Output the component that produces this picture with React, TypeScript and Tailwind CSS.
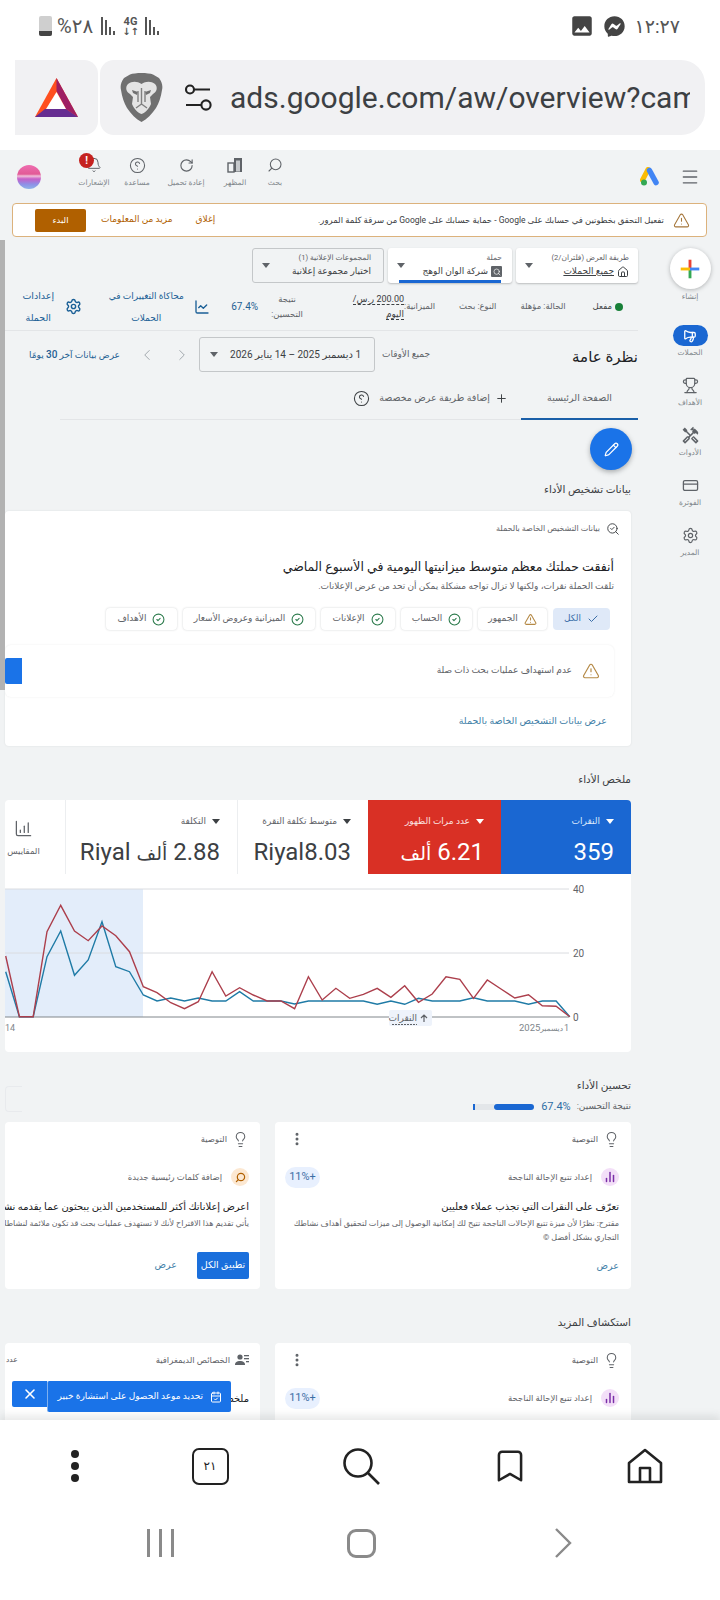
import React from "react";
import { Search, RotateCw, CircleHelp, Bell, Menu, Megaphone, Trophy, CreditCard, Settings, SearchCheck, Check, CircleCheck, TriangleAlert, Lightbulb, Pencil, EllipsisVertical, ChartColumnIncreasing, Plus, X, House, Bookmark, ChevronLeft, ChevronRight, ChartLine, CalendarCheck, ChartNoAxesColumn } from "lucide-react";
import { FaFacebookMessenger } from "react-icons/fa";
import { MdImage, MdOutlineHandyman } from "react-icons/md";

const Caret = ({ c = "border-t-[#5f6368]" }: { c?: string }) => (
  <span className={`inline-block w-0 h-0 border-x-[4px] border-x-transparent border-t-[5px] ${c}`} />
);

const Signal = () => (
  <svg width="18" height="18" viewBox="0 0 18 18" fill="#555">
    <rect x="0" y="0" width="2" height="18" /><rect x="4" y="3" width="2" height="15" /><rect x="8" y="10" width="2" height="8" /><rect x="12" y="14" width="2" height="4" />
  </svg>
);

const HeaderItem = ({ icon, label, className = "" }: { icon: React.ReactNode; label: string; className?: string }) => (
  <div className={`w-[40px] pt-[6px] flex flex-col items-center relative ${className}`}>
    <div className="h-[18px] flex items-center justify-center text-[#5f6368]">{icon}</div>
    <div className="mt-[3px] h-[12px] leading-[12px] text-[7.5px] text-[#80868b] whitespace-nowrap">{label}</div>
  </div>
);

const SideItem = ({ icon, label, active = false }: { icon: React.ReactNode; label: string; active?: boolean }) => (
  <div className="h-[50px] w-[60px] flex flex-col items-center">
    <div className={`h-[21px] w-[35px] rounded-full flex items-center justify-center ${active ? "bg-[#1a67d2] text-white" : "text-[#5f6368]"}`}>{icon}</div>
    <div className="mt-[1px] h-[12px] leading-[12px] text-[7.5px] text-[#80868b] whitespace-nowrap">{label}</div>
  </div>
);

const DiagChip = ({ label, icon, w, active = false }: { label: string; icon: React.ReactNode; w: string; active?: boolean }) => (
  <div className={`${w} h-[22px] rounded-[4px] flex items-center justify-center gap-[6px] text-[9px] whitespace-nowrap ${active ? "bg-[#dfe9f8] text-[#3b6ea8]" : "bg-white shadow-[0_0_2px_rgba(60,64,67,0.25)] text-[#5f6368]"}`}>
    {icon}<span>{label}</span>
  </div>
);

const okIcon = <CircleCheck size={13} className="text-[#2f7d4f]" />;

const Metric = ({ label, value, cls, labelCls, caret }: { label: string; value: React.ReactNode; cls: string; labelCls: string; caret: string }) => (
  <div className={`${cls} h-full flex flex-col pr-[17px] whitespace-nowrap overflow-hidden`}>
    <div className={`mt-[15px] h-[12px] leading-[12px] text-[9px] flex items-center gap-[6px] ${labelCls}`}>
      <Caret c={caret} /><span>{label}</span>
    </div>
    <div className="mt-[10px] text-[24px] leading-[30px]">{value}</div>
  </div>
);

const redY = [258,440,440,185,106,183,212,168,197,245,350,368,398,416,395,305,378,353,375,393,393,416,320,390,355,385,373,355,382,347,397,372,320,328,385,330,357,384,374,407,409,440];
const blueY = [305,440,440,260,183,316,270,155,290,305,375,393,384,393,384,393,393,365,393,393,393,402,393,393,393,393,393,403,393,403,385,393,393,393,383,393,393,393,403,393,393,440];
const pts = (a: number[]) => a.map((y, i) => `${(5.67 + i * 13.76).toFixed(1)},${(y / 3 + 870).toFixed(1)}`).join(" ");

const RecHead = ({ more = false }: { more?: boolean }) => (
  <div className="h-[34px] flex items-center pr-[11px] pl-[14px] text-[#5f6368]">
    <Lightbulb size={17} strokeWidth={1.5} />
    <span className="mr-[5px] text-[8.5px]">التوصية</span>
    {more && <EllipsisVertical size={16} strokeWidth={2.5} className="mr-auto" />}
  </div>
);

const PurpleRow = () => (
  <div className="h-[24px] mt-[9px] flex items-center pr-[12px] pl-[10px]">
    <span className="w-[18px] h-[18px] rounded-full bg-[#f3dff8] flex items-center justify-center text-[#7b2fa8]"><ChartNoAxesColumn size={12} strokeWidth={3} /></span>
    <span className="mr-[9px] text-[8.5px] text-[#5f6368]">إعداد تتبع الإحالة الناجحة</span>
    <span className="mr-auto w-[35px] h-[21px] rounded-full bg-[#e8f0fe] text-[#3c6ea5] text-[11px] flex items-center justify-center">+11%</span>
  </div>
);

export default function App() {
  return (
    <div dir="ltr" className="relative w-[720px] h-[1600px] overflow-hidden bg-white font-[Roboto,'DejaVu_Sans',sans-serif]">
      {/* status bar */}
      <div className="h-[60px] flex items-start justify-between pl-[39px] pr-[40px] pt-[16px] text-[#555]">
        <div className="flex items-center h-[20px]">
          <div className="w-[13px] h-[20px] rounded-[2px] bg-[#cfcfcf] flex items-end overflow-hidden"><div className="w-full h-[5px] bg-[#444]" /></div>
          <span className="ml-[5px] text-[20px] leading-none">%٢٨</span>
          <span className="ml-[8px]"><Signal /></span>
          <span className="ml-[3px] flex flex-col items-center text-[11px] leading-[10px] font-bold"><span>4G</span><span className="text-[10px] leading-[9px]">↓↑</span></span>
          <span className="ml-[6px]"><Signal /></span>
        </div>
        <div className="flex items-center h-[20px]">
          <MdImage size={26} className="text-[#444]" />
          <FaFacebookMessenger size={21} className="ml-[9px] text-[#444]" />
          <span className="ml-[10px] text-[19px] leading-none">١٢:٢٧</span>
        </div>
      </div>

      {/* url bar */}
      <div className="h-[90px] pl-[15px] pr-[15px] flex items-start">
        <div className="w-[83px] h-[75px] bg-[#f1f1f3] rounded-r-[14px] flex items-center justify-center">
          <svg width="43" height="40" viewBox="0 0 43 40">
            <polygon points="21.5,0 43,39 0,39" fill="#ff4f1f" />
            <polygon points="21.5,0 43,39 31,31 21.5,13" fill="#9e1f63" />
            <polygon points="0,39 43,39 31,31 10,31" fill="#662d91" />
            <polygon points="21.5,14 31,31 11,31" fill="#fff" />
          </svg>
        </div>
        <div className="flex-1 ml-[2px] h-[75px] bg-[#f1f1f3] rounded-l-[14px] rounded-r-[24px] flex items-center pl-[20px] pr-[15px] overflow-hidden">
          <svg width="43" height="49" viewBox="0 0 43 49" className="shrink-0">
            <path d="M10 1.5 C15 -0.5 28 -0.5 33 1.5 L39 5 C42 9 43 13 42 17 C41 24 39 30 36 35 C32 41 27 46 21.5 49 C16 46 11 41 7 35 C4 30 2 24 1 17 C0 13 1 9 4 5 Z" fill="#707070" />
            <path d="M8 11 C12 8 17 8 21.5 11 C26 8 31 8 35 11 C38 14 37 19 33 21 L30 24 L31 31 C29 36 25 40 21.5 41 C18 40 14 36 12 31 L13 24 L10 21 C6 19 5 14 8 11 Z" fill="#e4e4e4" />
            <path d="M12 17 L18 19 L17 22 L13 20 Z M31 17 L25 19 L26 22 L30 20 Z" fill="#707070" />
            <path d="M21.5 15 V31 M21.5 31 L16 35 M21.5 31 L27 35 M18 18 V29 M25 18 V29" stroke="#808080" strokeWidth="1.4" fill="none" />
          </svg>
          <svg width="27" height="27" viewBox="0 0 27 27" fill="none" stroke="#222" strokeWidth="2.1" className="shrink-0 ml-[22px]">
            <circle cx="5" cy="5.5" r="4" /><path d="M9 5.5h16" />
            <circle cx="21" cy="21" r="4.6" /><path d="M1 21h15.5" />
          </svg>
          <div className="ml-[18px] flex-1 overflow-hidden whitespace-nowrap text-[30px] leading-[40px] text-[#3c4043]">ads.google.com/aw/overview?campaignId=23</div>
        </div>
      </div>

      {/* main gray */}
      <div dir="rtl" className="relative h-[1270px] bg-[#f1f3f4] overflow-hidden">
        {/* header */}
        <div className="h-[53px] flex items-start pr-[20px] pl-[17px]">
          <Menu size={20} strokeWidth={1.6} className="self-center text-[#5f6368]" />
          <svg width="22" height="20" viewBox="0 0 22 20" className="self-center mr-[18px]">
            <path d="M8 2.5 L2.5 13" stroke="#fbbc04" strokeWidth="5" strokeLinecap="round" />
            <path d="M9.5 3.5 L16 15.5" stroke="#4285f4" strokeWidth="5.5" strokeLinecap="round" />
            <circle cx="4" cy="15.5" r="3" fill="#34a853" />
          </svg>
          <div className="flex-1" />
          <HeaderItem icon={<Search size={16} strokeWidth={1.6} className="-scale-x-100" />} label="بحث" />
          <HeaderItem icon={
            <svg width="16" height="16" viewBox="0 0 16 16"><rect x="1" y="6" width="6" height="9" fill="none" stroke="currentColor" strokeWidth="1.4" /><rect x="7" y="1" width="8" height="14" fill="currentColor" /><rect x="9" y="3.5" width="4" height="11" fill="#c6c9cc" /></svg>
          } label="المظهر" />
          <HeaderItem className="mr-[9px]" icon={<RotateCw size={15} strokeWidth={1.8} />} label="إعادة تحميل" />
          <HeaderItem className="mr-[9px]" icon={<CircleHelp size={17} strokeWidth={1.5} className="-scale-x-100" />} label="مساعدة" />
          <HeaderItem className="mr-[3px]" icon={<Bell size={16} strokeWidth={1.5} />} label="الإشعارات" />
          <div className="absolute left-[79px] top-[3px] w-[15px] h-[15px] rounded-full bg-[#c5221f] text-white text-[10px] leading-[15px] text-center font-bold">!</div>
          <div className="self-center mr-[33px] w-[24px] h-[24px] rounded-full bg-[linear-gradient(180deg,#ee6db0_0%,#e25a96_38%,#f0c0d8_46%,#c65fc8_58%,#8f8fe6_80%,#8db4e8_100%)]" />
        </div>

        {/* banner */}
        <div className="mr-[13px] ml-[12px] h-[34px] bg-white border border-[#dcb27c] rounded-[4px] flex items-center pr-[16px] pl-[22px]">
          <TriangleAlert size={17} strokeWidth={1.5} className="text-[#a5763a] shrink-0" />
          <span className="mr-[9px] text-[8.5px] text-[#3c4043] whitespace-nowrap">تفعيل التحقق بخطوتين في حسابك على Google - حماية حسابك على Google من سرقة كلمة المرور.</span>
          <span className="mr-auto text-[9px] text-[#b06000]">إغلاق</span>
          <span className="mr-[23px] text-[9px] text-[#b06000] whitespace-nowrap">مزيد من المعلومات</span>
          <span className="mr-[15px] w-[51px] h-[23px] bg-[#b06000] rounded-[2px] text-white text-[8.5px] flex items-center justify-center">البدء</span>
        </div>

        {/* body */}
        <div className="flex items-start">
          {/* sidebar */}
          <div className="w-[82px] shrink-0 flex flex-col items-start">
            <div className="mt-[11px] w-[60px] flex justify-center relative z-10">
              <div className="w-[41px] h-[41px] rounded-full bg-white shadow-[0_1px_4px_rgba(60,64,67,0.35)] flex items-center justify-center">
                <svg width="20" height="20" viewBox="0 0 28 28">
                  <rect x="12" y="1" width="4" height="13" fill="#ea4335" /><rect x="12" y="14" width="4" height="13" fill="#34a853" />
                  <rect x="1" y="12" width="13" height="4" fill="#fbbc04" /><rect x="14" y="12" width="13" height="4" fill="#4285f4" />
                </svg>
              </div>
            </div>
            <div className="w-[60px] mt-[2px] h-[12px] text-center leading-[12px] text-[7.5px] text-[#80868b]">إنشاء</div>
            <div className="h-[22px]" />
            <SideItem active icon={<Megaphone size={14} strokeWidth={2.2} className="-scale-x-100" />} label="الحملات" />
            <SideItem icon={<Trophy size={17} strokeWidth={1.7} />} label="الأهداف" />
            <SideItem icon={<MdOutlineHandyman size={19} />} label="الأدوات" />
            <SideItem icon={<CreditCard size={17} strokeWidth={1.8} />} label="الفوترة" />
            <SideItem icon={<Settings size={17} strokeWidth={1.7} />} label="المدير" />
          </div>

          {/* content */}
          <div className="w-[638px] shrink-0 relative">
            {/* scrollbar strip */}
            <div className="absolute left-0 top-[3px] w-[5px] h-[450px] bg-[#b2b2b2] z-10" />

            <div className="mt-[11px] h-[35px] flex gap-[4px]">
              <div className="w-[122px] bg-white rounded-[3px] shadow-[0_1px_2px_rgba(60,64,67,0.3)] flex items-center pr-[9px] pl-[9px]">
                <div className="flex-1">
                  <div className="text-[7.5px] leading-[12px] text-[#5f6368] whitespace-nowrap">طريقة العرض (فلتران/2)</div>
                  <div className="flex items-center gap-[3px] text-[9px] leading-[15px] text-[#3c4043] whitespace-nowrap"><House size={12} /><span className="underline">جميع الحملات</span></div>
                </div>
                <Caret />
              </div>
              <div className="w-[124px] relative bg-white rounded-[3px] shadow-[0_1px_2px_rgba(60,64,67,0.3)] flex items-center pr-[10px] pl-[9px]">
                <div className="flex-1">
                  <div className="text-[7.5px] leading-[12px] text-[#5f6368]">حملة</div>
                  <div className="flex items-center gap-[3px] text-[9px] leading-[15px] text-[#3c4043] whitespace-nowrap"><span className="w-[11px] h-[11px] bg-[#5f6368] rounded-[1px] flex items-center justify-center"><Search size={8} className="text-white" /></span><span>شركة الوان الوهج</span></div>
                </div>
                <Caret />
                <div className="absolute bottom-0 right-[11px] w-[102px] h-[3px] bg-[#1a67d2]" />
              </div>
              <div className="w-[132px] bg-[#f1f3f4] border border-[#c4c7c9] rounded-[3px] flex items-center pr-[12px] pl-[9px]">
                <div className="flex-1">
                  <div className="text-[7.5px] leading-[12px] text-[#5f6368] whitespace-nowrap">المجموعات الإعلانية (1)</div>
                  <div className="text-[9px] leading-[15px] text-[#3c4043] whitespace-nowrap">اختيار مجموعة إعلانية</div>
                </div>
                <Caret />
              </div>
            </div>

            {/* status row */}
            <div className="h-[48px] border-b border-[#e3e5e7] flex items-center text-[8.5px] text-[#5f6368] whitespace-nowrap ml-[5px]">
              <span className="w-[8px] h-[8px] rounded-full bg-[#188038] mr-[15px]" />
              <span className="mr-[3px] text-[#3c4043]">مفعل</span>
              <span className="mr-[27px]">الحالة: مؤهلة</span>
              <span className="mr-[24px]">النوع: بحث</span>
              <span className="mr-[24px]">الميزانية:</span>
              <span className="w-[54px] text-[#3c4043] text-[9px] leading-[15px] whitespace-normal"><span className="border-b border-dashed border-[#3c4043]">200.00 ر.س/ اليوم</span></span>
              <span className="mr-[46px] w-[34px] leading-[15px] whitespace-normal text-center">نتيجة التحسين:</span>
              <span className="mr-[12px] text-[#1f5f93] text-[10px]">67.4%</span>
              <ChartLine size={16} className="mr-[21px] text-[#1a5f96]" />
              <span className="mr-[6px] w-[84px] leading-[22px] text-[9px] whitespace-normal text-center text-[#1a5f96]">محاكاة التغييرات في الحملات</span>
              <Settings size={17} className="mr-[22px] text-[#1a5f96]" />
              <span className="mr-[10px] w-[34px] leading-[22px] text-[9.5px] whitespace-normal text-center text-[#1a5f96]">إعدادات الحملة</span>
            </div>

            {/* overview row */}
            <div className="h-[47px] flex items-center">
              <div className="text-[15px] text-[#202124] whitespace-nowrap pt-[5px]">نظرة عامة</div>
              <div className="mr-auto pl-[26px] flex items-center text-[#5f6368] whitespace-nowrap">
                <span className="text-[9px]">جميع الأوقات</span>
                <div className="mr-[7px] w-[176px] h-[35px] border border-[#c4c7c9] rounded-[3px] flex items-center justify-between pr-[13px] pl-[10px] text-[10px] text-[#3c4043]">
                  <span>1 ديسمبر 2025 – 14 يناير 2026</span><Caret />
                </div>
                <ChevronRight size={18} strokeWidth={1.2} className="mr-[8px] text-[#9aa0a6]" />
                <ChevronLeft size={18} strokeWidth={1.2} className="mr-[17px] text-[#9aa0a6]" />
                <span className="mr-[18px] w-[94px] text-[9px] text-[#1f5f93]">عرض بيانات آخر <span className="text-[10px] font-medium">30</span> يومًا</span>
              </div>
            </div>

            {/* tabs */}
            <div className="h-[42px] ml-[60px] border-b border-[#e3e5e7] flex items-stretch text-[9.5px] text-[#5f6368] whitespace-nowrap">
              <div className="w-[117px] -mb-[1px] border-b-2 border-[#1a5fa8] flex items-center justify-center">الصفحة الرئيسية</div>
              <div className="mr-[13px] flex items-center">
                <Plus size={13} strokeWidth={1.8} className="text-[#3c4043]" />
                <span className="mr-[5px]">إضافة طريقة عرض مخصصة</span>
                <CircleHelp size={17} strokeWidth={1.5} className="mr-[9px] -scale-x-100 text-[#3c4043]" />
              </div>
            </div>

            {/* pencil */}
            <div className="mt-[8px] mr-[6px] h-[42px] flex">
              <div className="w-[42px] h-[42px] rounded-full bg-[#1a73e8] shadow-[0_2px_5px_rgba(60,64,67,0.4)] flex items-center justify-center"><Pencil size={15} className="text-white" /></div>
            </div>

            <div className="mr-[7px] h-[40px] mb-[1px] flex items-center text-[10.5px] text-[#3c4043]">بيانات تشخيص الأداء</div>

            {/* diagnostic card */}
            <div className="mr-[7px] ml-[5px] h-[235px] bg-white rounded-[4px] overflow-hidden shadow-[0_0_2px_rgba(60,64,67,0.12)]">
              <div className="h-[34px] flex items-center pr-[11px] pt-[1px] text-[8px] text-[#5f6368]">
                <SearchCheck size={14} strokeWidth={1.6} className="text-[#3c4043]" />
                <span className="mr-[6px]">بيانات التشخيص الخاصة بالحملة</span>
              </div>
              <div className="mt-[12px] pr-[17px] text-[12.5px] leading-[20px] text-[#202124] whitespace-nowrap">أنفقت حملتك معظم متوسط ميزانيتها اليومية في الأسبوع الماضي</div>
              <div className="pr-[17px] text-[9px] leading-[18px] text-[#5f6368] whitespace-nowrap">تلقت الحملة نقرات، ولكنها لا تزال تواجه مشكلة يمكن أن تحد من عرض الإعلانات.</div>
              <div className="mt-[13px] pr-[21px] flex gap-[6px]">
                <DiagChip active w="w-[57px]" label="الكل" icon={<Check size={12} />} />
                <DiagChip w="w-[69px]" label="الجمهور" icon={<TriangleAlert size={13} className="text-[#b58a47]" />} />
                <DiagChip w="w-[71px]" label="الحساب" icon={okIcon} />
                <DiagChip w="w-[74px]" label="الإعلانات" icon={okIcon} />
                <DiagChip w="w-[132px]" label="الميزانية وعروض الأسعار" icon={okIcon} />
                <DiagChip w="w-[71px]" label="الأهداف" icon={okIcon} />
              </div>
              <div className="mt-[15px] mr-[17px] h-[52px] rounded-[6px] shadow-[0_0_2px_rgba(60,64,67,0.1)] flex items-center pr-[14px]">
                <TriangleAlert size={18} strokeWidth={1.6} className="text-[#b58a47]" />
                <span className="mr-[10px] text-[9px] text-[#5f6368] whitespace-nowrap">عدم استهداف عمليات بحث ذات صلة</span>
                <span className="mr-auto w-[17px] h-[26px] bg-[#1a73e8] rounded-l-[2px]" />
              </div>
              <div className="mt-[15px] pr-[24px] text-[9.5px] leading-[18px] text-[#3f7fa8] whitespace-nowrap">عرض بيانات التشخيص الخاصة بالحملة</div>
            </div>

            <div className="mt-[24px] mb-[10px] mr-[7px] h-[20px] flex items-center text-[10.5px] text-[#3c4043]">ملخص الأداء</div>

            {/* metrics */}
            <div className="mr-[7px] ml-[5px] h-[74px] flex bg-white rounded-t-[4px] overflow-hidden">
              <Metric cls="w-[130px] bg-[#1a67d2] text-white" labelCls="text-[#dbe8fb]" caret="border-t-white" label="النقرات" value="359" />
              <Metric cls="w-[133px] bg-[#d93025] text-white" labelCls="text-[#fbe3e1]" caret="border-t-white" label="عدد مرات الظهور" value={<>6.21 <span className="text-[19px]">ألف</span></>} />
              <Metric cls="w-[131px] border-l border-[#eceef0] text-[#3c4043]" labelCls="text-[#5f6368]" caret="border-t-[#3c4043]" label="متوسط تكلفة النقرة" value="Riyal8.03" />
              <Metric cls="w-[172px] border-l border-[#eceef0] text-[#3c4043]" labelCls="text-[#5f6368]" caret="border-t-[#3c4043]" label="التكلفة" value={<>2.88 <span className="text-[19px]">ألف</span> Riyal</>} />
              <div className="flex-1 flex flex-col items-end pl-[2px] pt-[19px] text-[#5f6368]">
                <div className="w-[33px] flex flex-col items-center">
                  <ChartColumnIncreasing size={19} strokeWidth={1.6} />
                  <span className="mt-[7px] text-[8.5px] whitespace-nowrap">المقاييس</span>
                </div>
              </div>
            </div>

            {/* chart */}
            <div className="mr-[7px] ml-[5px] h-[178px] bg-white rounded-b-[4px] overflow-hidden">
              <svg width="626" height="178" viewBox="5 874 626 178" className="block [direction:ltr]">
                <rect x="5" y="889" width="138" height="128" fill="#e3edfa" />
                <line x1="5" x2="569" y1="889" y2="889" stroke="#dadce0" />
                <line x1="5" x2="569" y1="953" y2="953" stroke="#dadce0" />
                <line x1="5" x2="569" y1="1017" y2="1017" stroke="#80868b" />
                <text x="573" y="893" fontSize="10" fill="#5f6368">40</text>
                <text x="573" y="957" fontSize="10" fill="#5f6368">20</text>
                <text x="573" y="1021" fontSize="10" fill="#5f6368">0</text>
                <polyline points={pts(blueY)} fill="none" stroke="#1f7ba6" strokeWidth="1.4" />
                <polyline points={pts(redY)} fill="none" stroke="#ac3f4c" strokeWidth="1.4" />
                <rect x="389" y="1010" width="43" height="16" rx="2" fill="#eef3fb" />
                <text x="417" y="1021" fontSize="9" fill="#5f6368" textAnchor="end">النقرات</text>
                <line x1="392" x2="417" y1="1024.5" y2="1024.5" stroke="#5f6368" strokeDasharray="2 1" />
                <path d="M424 1022v-7M421 1018l3-3 3 3" fill="none" stroke="#5f6368" strokeWidth="1.2" />
                <text x="5" y="1031" fontSize="9" fill="#80868b">14</text>
                <text x="519" y="1031" fontSize="9.5" fill="#80868b">2025</text>
                <text x="563" y="1031" fontSize="7.5" fill="#80868b" textAnchor="end">ديسمبر</text>
                <text x="569" y="1031" fontSize="9" fill="#80868b" textAnchor="end">1</text>
              </svg>
            </div>

            {/* optimisation */}
            <div className="mt-[24px] mr-[7px] h-[20px] flex items-center text-[10.5px] text-[#3c4043]">
              <span>تحسين الأداء</span>
            </div>
            <div className="h-[22px] mr-[7px] flex items-center text-[9px] text-[#5f6368] whitespace-nowrap">
              <span>نتيجة التحسين:</span>
              <span className="mr-[6px] text-[#2f6ea5] text-[11px]">67.4%</span>
              <span className="mr-[7px] w-[40px] h-[6px] rounded-full bg-[#1a67d2]" />
              <span className="w-[19px] h-[6px] bg-[#e3e6e9]" />
              <span className="w-[2px] h-[6px] bg-[#1a67d2]" />
              <span className="mr-auto ml-[5px] w-[17px] h-[26px] -mt-[16px] border border-[#e8eaed] rounded-l-[4px] border-r-0" />
            </div>

            <div className="mt-[4px] mr-[7px] ml-[5px] h-[167px] flex gap-[15px]">
              <div className="w-[356px] bg-white rounded-[4px] overflow-hidden">
                <RecHead more />
                <PurpleRow />
                <div className="mt-[9px] pr-[12px] text-[10px] leading-[18px] text-[#202124] whitespace-nowrap">تعرّف على النقرات التي تجذب عملاء فعليين</div>
                <div className="mt-[1px] px-[12px] text-[8px] leading-[14px] text-[#5f6368]">مقترح: نظرًا لأن ميزة تتبع الإحالات الناجحة تتيح لك إمكانية الوصول إلى ميزات لتحقيق أهداف نشاطك التجاري بشكل أفضل ©</div>
                <div className="mt-[14px] pr-[12px] text-[9.5px] text-[#3f7fa8]">عرض</div>
              </div>
              <div className="flex-1 min-w-0 bg-white rounded-[4px] overflow-hidden">
                <RecHead />
                <div className="h-[24px] mt-[9px] flex items-center pr-[11px] whitespace-nowrap">
                  <span className="w-[18px] h-[18px] rounded-full bg-[#fce8d2] flex items-center justify-center text-[#b06000]"><Search size={11} strokeWidth={2.6} className="-scale-x-100" /></span>
                  <span className="mr-[9px] text-[8.5px] text-[#5f6368]">إضافة كلمات رئيسية جديدة</span>
                </div>
                <div className="mt-[9px] pr-[11px] text-[10px] leading-[18px] text-[#202124] whitespace-nowrap">اعرض إعلاناتك أكثر للمستخدمين الذين يبحثون عما يقدمه نشاطك التجاري</div>
                <div className="mt-[1px] pr-[11px] text-[8px] leading-[14px] text-[#5f6368] whitespace-nowrap">يأتي تقديم هذا الاقتراح لأنك لا تستهدف عمليات بحث قد تكون ملائمة لنشاطك التجاري</div>
                <div className="mt-[21px] pr-[11px] flex items-center">
                  <span className="w-[52px] h-[27px] bg-[#1a6fdc] rounded-[2px] text-white text-[9.5px] flex items-center justify-center">تطبيق الكل</span>
                  <span className="mr-[20px] text-[9.5px] text-[#3f7fa8]">عرض</span>
                </div>
              </div>
            </div>

            <div className="mt-[24px] mb-[10px] mr-[7px] h-[20px] flex items-center text-[10.5px] text-[#3c4043]">استكشاف المزيد</div>

            <div className="mr-[7px] ml-[5px] h-[167px] flex gap-[15px]">
              <div className="w-[356px] bg-white rounded-[4px] overflow-hidden">
                <RecHead more />
                <PurpleRow />
              </div>
              <div className="flex-1 min-w-0 bg-white rounded-[4px] overflow-hidden">
                <div className="h-[34px] flex items-center pr-[11px] text-[#5f6368] whitespace-nowrap">
                  <svg width="14" height="12" viewBox="0 0 14 12" fill="#5f6368"><circle cx="5" cy="3" r="2.6" /><path d="M0 11c0-3 2-4 5-4s5 1 5 4z" /><rect x="9" y="1" width="5" height="1.3" /><rect x="9" y="4" width="5" height="1.3" /><rect x="11" y="7" width="3" height="1.3" /></svg>
                  <span className="mr-[5px] text-[8.5px]">الخصائص الديمغرافية</span>
                  <span className="mr-auto pl-[1px] text-[7.5px]">عدد</span>
                </div>
                <div className="mt-[13px] pr-[11px] text-[10px] leading-[18px] text-[#202124] whitespace-nowrap">ملخص الأداء حسب الفئة العمرية والجنس</div>
              </div>
            </div>
          </div>
        </div>

        {/* toast */}
        <div dir="ltr" className="absolute left-[12px] top-[1231px] z-20 flex items-start">
          <div className="w-[35px] h-[26px] bg-[#1a73e8] rounded-l-[2px] flex items-center justify-center"><X size={16} strokeWidth={2.4} className="text-white" /></div>
          <div dir="rtl" className="w-[184px] h-[31px] bg-[#1a73e8] border-l border-l-[#7fb0ef] rounded-[2px] flex items-center pr-[9px] text-white text-[9px] whitespace-nowrap">
            <CalendarCheck size={12} />
            <span className="mr-[7px]">تحديد موعد الحصول على استشارة خبير</span>
          </div>
        </div>
      </div>

      {/* bottom bars */}
      <div className="relative h-[180px] bg-white shadow-[0_-4px_8px_rgba(60,64,67,0.12)]">
        <div className="h-[92px] flex items-center pl-[45px] text-[#222]">
          <div className="w-[60px] flex flex-col items-center gap-[4px]">
            <span className="w-[8px] h-[8px] rounded-full bg-[#222]" /><span className="w-[8px] h-[8px] rounded-full bg-[#222]" /><span className="w-[8px] h-[8px] rounded-full bg-[#222]" />
          </div>
          <div className="ml-[75px] w-[60px] flex justify-center">
            <div className="w-[37px] h-[37px] border-[2.5px] border-[#222] rounded-[7px] flex items-center justify-center text-[12px]">٢١</div>
          </div>
          <div className="ml-[91px] w-[60px] flex justify-center">
            <svg width="38" height="38" viewBox="0 0 38 38" fill="none" stroke="#222" strokeWidth="2.6"><circle cx="16" cy="16" r="13.5" /><path d="M26 26l11 11" /></svg>
          </div>
          <div className="ml-[89px] w-[60px] flex justify-center"><Bookmark size={38} strokeWidth={1.6} /></div>
          <div className="ml-[75px] w-[60px] flex justify-center">
            <svg width="36" height="36" viewBox="0 0 36 36" fill="none" stroke="#222" strokeWidth="2.6" strokeLinejoin="round"><path d="M2 15L18 2l16 13v19H2z" /><path d="M13 34V20h10v14" /></svg>
          </div>
        </div>
        <div className="mt-[16px] h-[30px] flex items-center text-[#8a8a8a]">
          <div className="ml-[147px] w-[27px] flex justify-between"><span className="w-[3px] h-[28px] bg-[#8a8a8a]" /><span className="w-[3px] h-[28px] bg-[#8a8a8a]" /><span className="w-[3px] h-[28px] bg-[#8a8a8a]" /></div>
          <div className="ml-[173px] w-[29px] h-[29px] border-[3px] border-[#8a8a8a] rounded-[9px]" />
          <svg width="18" height="30" viewBox="0 0 18 30" fill="none" stroke="#8a8a8a" strokeWidth="2.4" className="ml-[178px]"><path d="M2 1l14 14L2 29" /></svg>
        </div>
      </div>
    </div>
  );
}
